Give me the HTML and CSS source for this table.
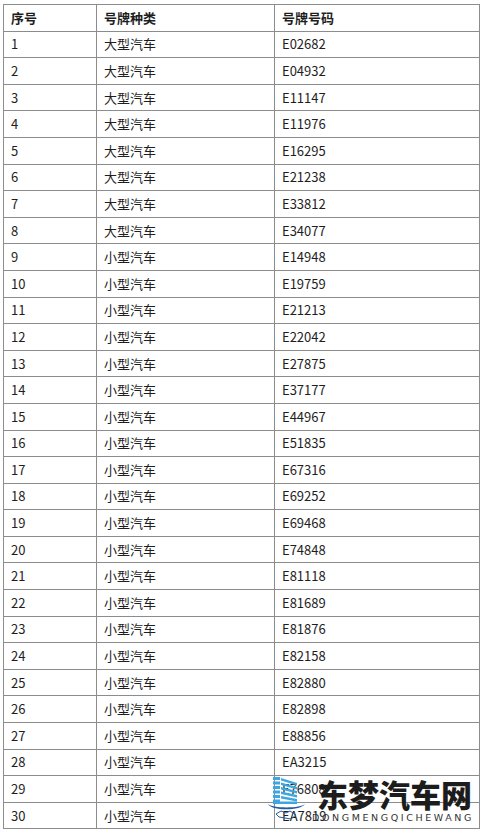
FILE: index.html
```html
<!DOCTYPE html>
<html lang="zh">
<head>
<meta charset="utf-8">
<link rel="stylesheet" href="styles.css">
</head>
<body>
<div class="page">
<table class="plates">
<colgroup><col class="c1"><col class="c2"><col class="c3"></colgroup>
<thead>
<tr><th>序号</th><th>号牌种类</th><th>号牌号码</th></tr>
</thead>
<tbody>
<tr><td>1</td><td>大型汽车</td><td>E02682</td></tr>
<tr><td>2</td><td>大型汽车</td><td>E04932</td></tr>
<tr><td>3</td><td>大型汽车</td><td>E11147</td></tr>
<tr><td>4</td><td>大型汽车</td><td>E11976</td></tr>
<tr><td>5</td><td>大型汽车</td><td>E16295</td></tr>
<tr><td>6</td><td>大型汽车</td><td>E21238</td></tr>
<tr><td>7</td><td>大型汽车</td><td>E33812</td></tr>
<tr><td>8</td><td>大型汽车</td><td>E34077</td></tr>
<tr><td>9</td><td>小型汽车</td><td>E14948</td></tr>
<tr><td>10</td><td>小型汽车</td><td>E19759</td></tr>
<tr><td>11</td><td>小型汽车</td><td>E21213</td></tr>
<tr><td>12</td><td>小型汽车</td><td>E22042</td></tr>
<tr><td>13</td><td>小型汽车</td><td>E27875</td></tr>
<tr><td>14</td><td>小型汽车</td><td>E37177</td></tr>
<tr><td>15</td><td>小型汽车</td><td>E44967</td></tr>
<tr><td>16</td><td>小型汽车</td><td>E51835</td></tr>
<tr><td>17</td><td>小型汽车</td><td>E67316</td></tr>
<tr><td>18</td><td>小型汽车</td><td>E69252</td></tr>
<tr><td>19</td><td>小型汽车</td><td>E69468</td></tr>
<tr><td>20</td><td>小型汽车</td><td>E74848</td></tr>
<tr><td>21</td><td>小型汽车</td><td>E81118</td></tr>
<tr><td>22</td><td>小型汽车</td><td>E81689</td></tr>
<tr><td>23</td><td>小型汽车</td><td>E81876</td></tr>
<tr><td>24</td><td>小型汽车</td><td>E82158</td></tr>
<tr><td>25</td><td>小型汽车</td><td>E82880</td></tr>
<tr><td>26</td><td>小型汽车</td><td>E82898</td></tr>
<tr><td>27</td><td>小型汽车</td><td>E88856</td></tr>
<tr><td>28</td><td>小型汽车</td><td>EA3215</td></tr>
<tr><td>29</td><td>小型汽车</td><td>E76808</td></tr>
<tr><td>30</td><td>小型汽车</td><td>EA7819</td></tr>
</tbody>
</table>

<div class="watermark">
  <svg class="wm-icon" width="40" height="48" viewBox="0 0 40 48">
    <g fill="#3ea6e0">
      <rect x="6" y="2" width="7" height="3"/>
      <rect x="6" y="6.5" width="7" height="3"/>
      <rect x="6" y="11" width="7" height="3"/>
      <rect x="6" y="15.5" width="7" height="3"/>
      <rect x="6" y="20" width="7" height="3"/>
      <rect x="6" y="24.5" width="7" height="3"/>
      <polygon points="14,3 30,8 30,10.5 14,5.5"/>
      <polygon points="14,7.5 30,12 30,14.5 14,10"/>
      <polygon points="14,12 30,16 30,18.5 14,14.5"/>
      <polygon points="14,16.5 30,20 30,22.5 14,19"/>
      <polygon points="14,21 30,24 30,26.5 14,23.5"/>
      <rect x="6" y="26.5" width="24" height="2.5"/>
    </g>
    <path d="M1 29 C4 36 34 36 38 29 C34 33.5 5 33.5 1 29 Z" fill="#1f5da8"/>
    <path d="M9 39 l5 -3 l5 2 l4 -2 l6 4 l-5 4 l-6 -1 l-6 -1 z" fill="none" stroke="#1f5da8" stroke-width="1"/>
  </svg>
  <div class="wm-text">
    <div class="wm-title">东梦汽车网</div>
    <div class="wm-sub">DONGMENGQICHEWANG</div>
  </div>
</div>
</div>
</body>
</html>
```

FILE: styles.css
```css
html, body {
  margin: 0;
  padding: 0;
  background: #ffffff;
}

.page {
  position: relative;
  width: 480px;
  height: 830px;
  padding: 4px 0 0 3px;
  box-sizing: border-box;
  overflow: hidden;
}

.plates {
  border-collapse: collapse;
  width: 476px;
  table-layout: fixed;
  font-family: "Noto Sans CJK SC", "Noto Sans", sans-serif;
  font-size: 13px;
  color: #1e1e1e;
}

.c1 { width: 93px; }
.c2 { width: 178px; }
.c3 { width: 205px; }

.plates tr {
  height: 26.6px;
}

.plates th,
.plates td {
  border: 1px solid #8c8c8c;
  padding: 0 0 0 7px;
  text-align: left;
  vertical-align: middle;
  line-height: 16px;
  white-space: nowrap;
}

.plates th {
  font-weight: 700;
}

.watermark {
  position: absolute;
  left: 267px;
  top: 775px;
  display: flex;
  align-items: flex-start;
}

.wm-icon {
  display: block;
}

.wm-text {
  display: flex;
  flex-direction: column;
  margin-left: 10px;
}

.wm-title {
  font-family: "Noto Sans CJK SC", sans-serif;
  font-weight: 900;
  font-size: 31px;
  line-height: 38px;
  color: #1c1c1c;
}

.wm-sub {
  font-family: "DejaVu Sans", "Noto Sans", sans-serif;
  font-size: 9.5px;
  line-height: 12px;
  letter-spacing: 2.6px;
  color: #333333;
  margin-left: -5px;
  margin-top: -1px;
}
```
